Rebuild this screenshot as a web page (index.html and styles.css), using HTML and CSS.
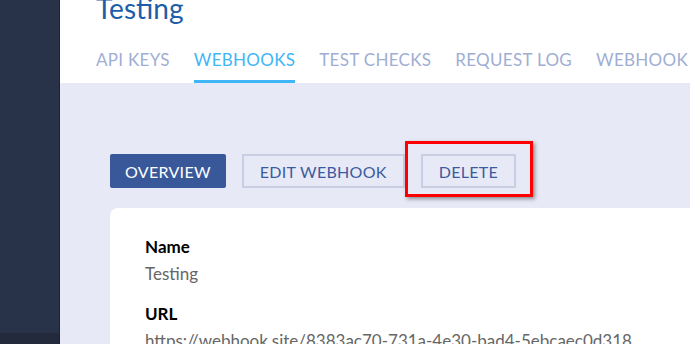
FILE: index.html
```html
<!DOCTYPE html>
<html lang="en">
<head>
    <meta charset="UTF-8">
    <meta name="viewport" content="width=device-width, initial-scale=1.0">
    <title>Testing - Webhooks</title>
    <link rel="stylesheet" href="styles.css">
</head>
<body>
    <div class="layout">
        <aside class="sidebar">
            <div class="sidebar-foot"></div>
        </aside>
        <main class="main">
            <header class="page-header">
                <h1 class="page-title">Testing</h1>
                <nav class="tabs">
                    <a class="tab">API KEYS</a>
                    <a class="tab active">WEBHOOKS</a>
                    <a class="tab">TEST CHECKS</a>
                    <a class="tab">REQUEST LOG</a>
                    <a class="tab">WEBHOOK LOG</a>
                </nav>
            </header>
            <section class="content">
                <div class="actions">
                    <button class="btn btn-primary">OVERVIEW</button>
                    <button class="btn">EDIT WEBHOOK</button>
                    <div class="highlight-wrap">
                        <button class="btn">DELETE</button>
                        <span class="highlight"></span>
                    </div>
                </div>
                <div class="card">
                    <div class="field">
                        <div class="field-label">Name</div>
                        <div class="field-value">Testing</div>
                    </div>
                    <div class="field">
                        <div class="field-label">URL</div>
                        <div class="field-value">https://webhook.site/8383ac70-731a-4e30-bad4-5ebcaec0d318</div>
                    </div>
                </div>
            </section>
        </main>
    </div>
</body>
</html>
```

FILE: styles.css
```css
/* Page layout */
body, html {
    margin: 0;
    padding: 0;
    height: 100%;
    overflow: hidden;
    font-family: 'Lato', 'Noto Sans', sans-serif;
}

.layout {
    display: flex;
    height: 100%;
}

.sidebar {
    width: 59px;
    flex-shrink: 0;
    background-color: #28334a;
    border-right: 1px solid #1b2233;
    display: flex;
    flex-direction: column;
    justify-content: flex-end;
}

.sidebar-foot {
    height: 11px;
    background-color: #222a3c;
}

.main {
    flex: 1;
    min-width: 0;
    overflow: hidden;
    background-color: #e7eaf6;
}

/* Header */
.page-header {
    background-color: #fff;
    padding: 0 36px;
    display: flow-root;
}

.page-title {
    margin: -8px 0 0;
    font-size: 28px;
    line-height: 32px;
    font-weight: 400;
    color: #1d5ea8;
}

.tabs {
    display: flex;
    gap: 24px;
    margin-top: 25px;
    white-space: nowrap;
}

.tab {
    font-size: 17px;
    line-height: 22px;
    color: #a0aed4;
    padding-bottom: 9px;
    border-bottom: 3px solid transparent;
    letter-spacing: 0.3px;
}

.tab.active {
    color: #3fb6f6;
    border-bottom-color: #3fb6f6;
}

/* Content */
.content {
    padding: 71px 0 0 50px;
}

.actions {
    display: flex;
    gap: 16px;
    align-items: center;
}

.btn {
    font-family: inherit;
    font-size: 16px;
    height: 34px;
    padding: 0 16px;
    border: 2px solid #c9cee2;
    background-color: #e7eaf6;
    color: #3b5aa0;
    letter-spacing: 0.3px;
}

.btn-primary {
    padding: 0 13px;
    background-color: #39589a;
    border-color: #39589a;
    color: #fff;
    border-radius: 2px;
}

.highlight-wrap {
    position: relative;
}

.highlight {
    position: absolute;
    top: -13px;
    left: -16px;
    right: -17px;
    bottom: -9px;
    border: 3px solid #ff0000;
    box-shadow: 2px 2px 4px rgba(0, 0, 0, 0.4);
}

.card {
    margin: 20px -40px 0 0;
    background-color: #fff;
    border-radius: 8px;
    padding: 28px 35px;
}

.field {
    margin-bottom: 18px;
}

.field-label {
    font-size: 17px;
    font-weight: 700;
    color: #000;
    line-height: 22px;
}

.field-value {
    font-size: 17px;
    color: #666;
    line-height: 22px;
    margin-top: 5px;
    white-space: nowrap;
}
```
